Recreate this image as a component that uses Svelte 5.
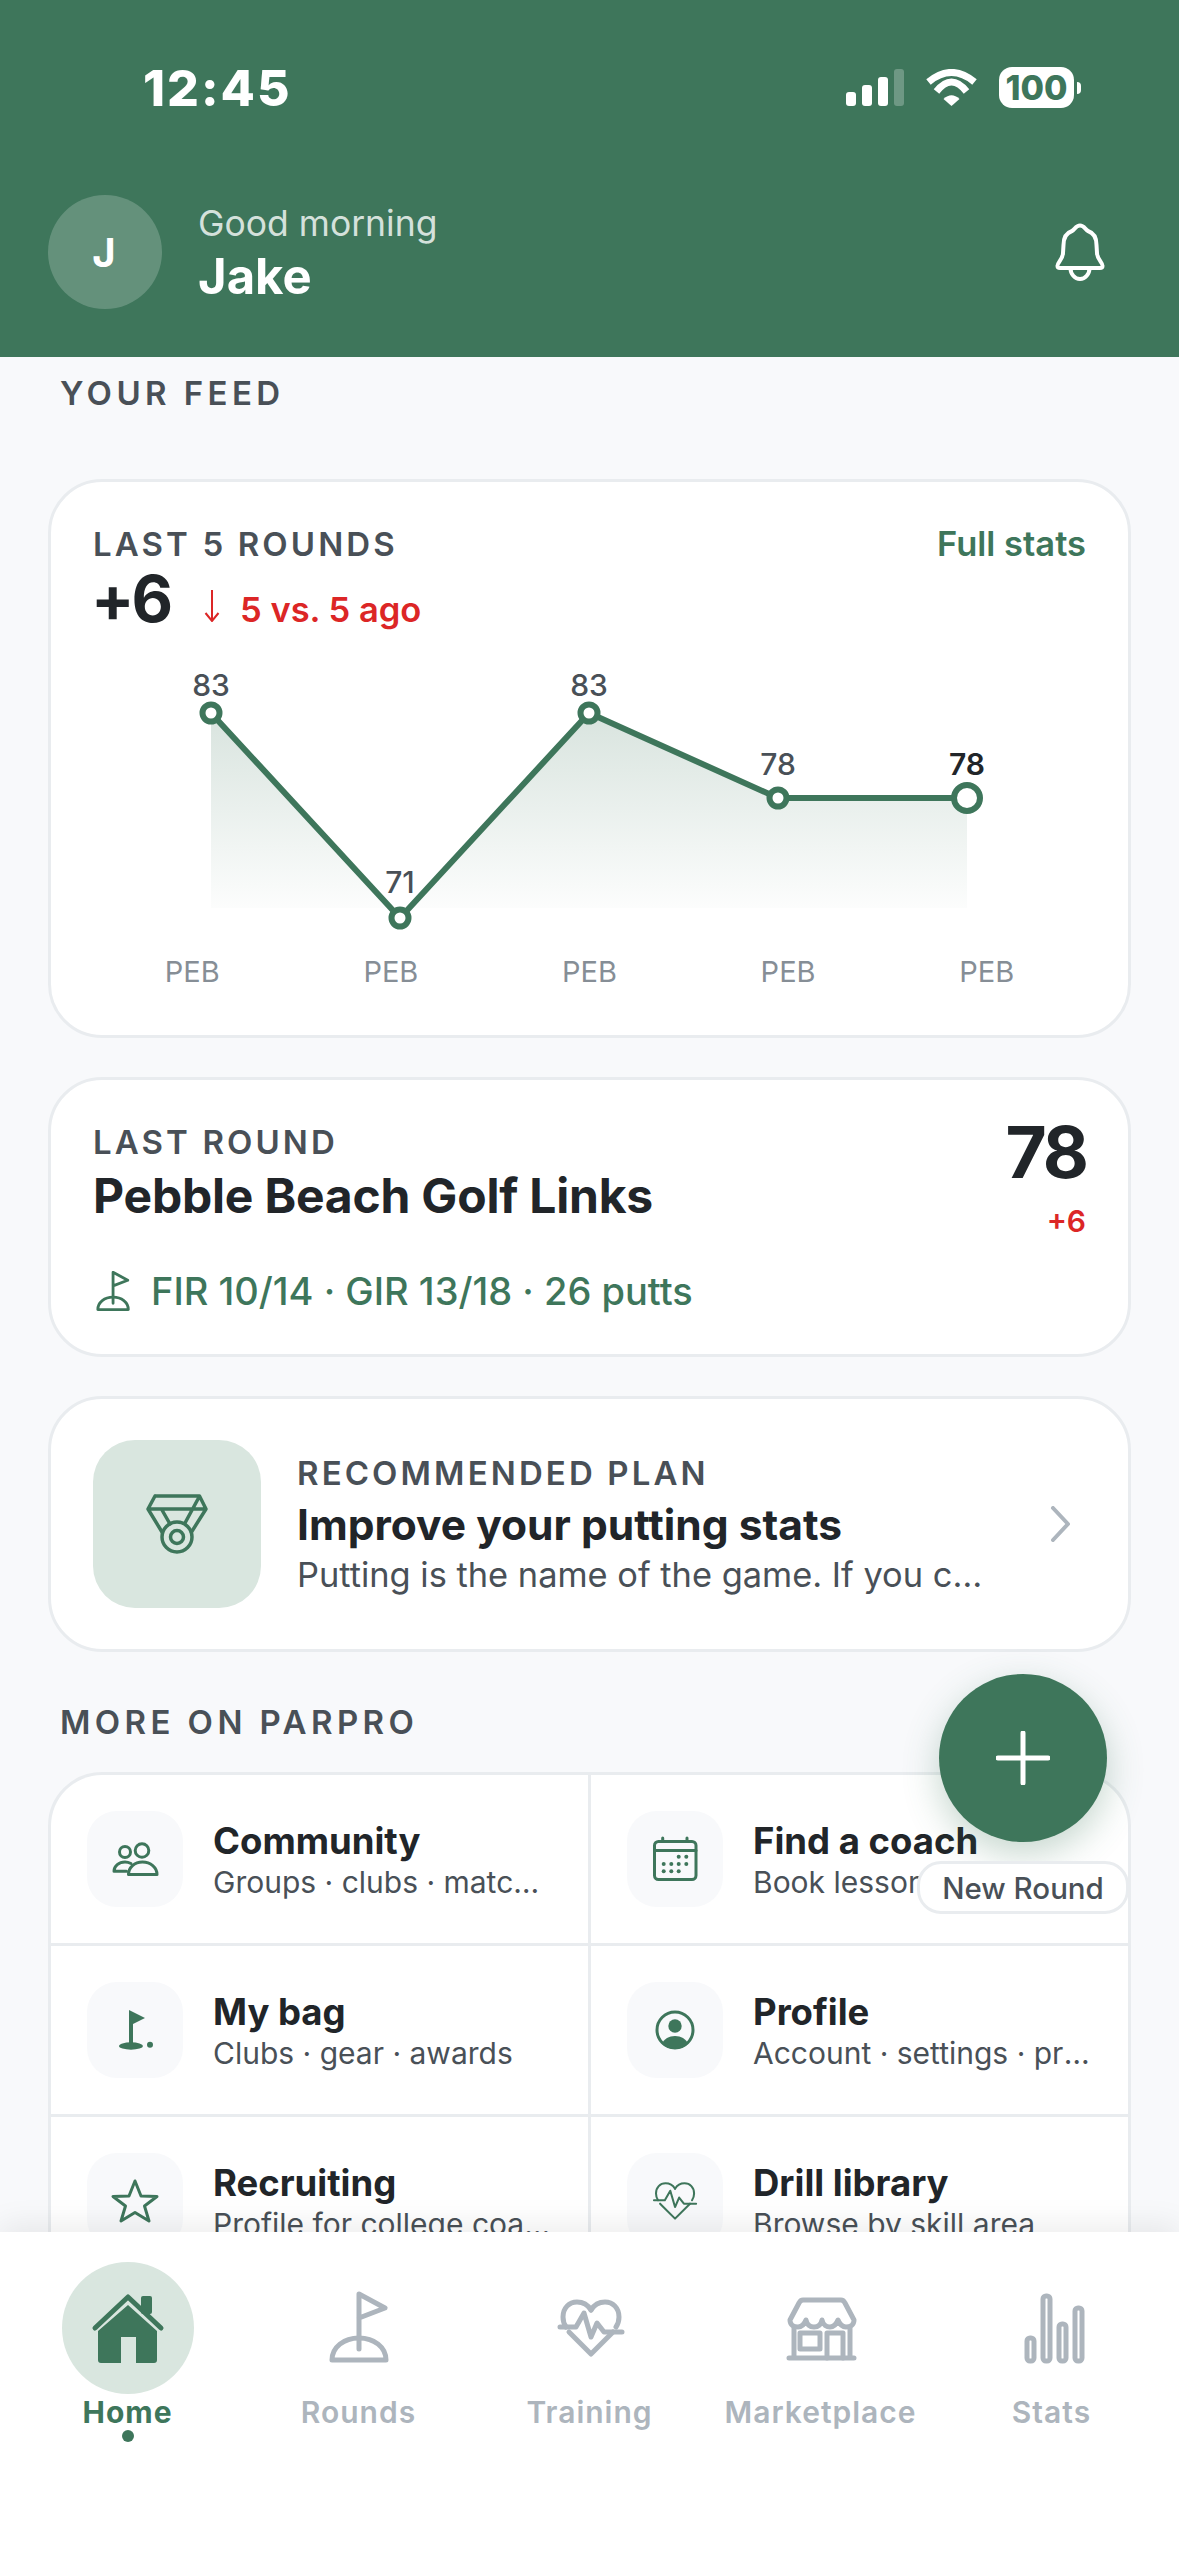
<script>
  // chart points in svg coordinates
  const points = [
    { x: 118, y: 54, value: 83, labelY: 37 },
    { x: 307, y: 259, value: 71, labelY: 234 },
    { x: 496, y: 54, value: 83, labelY: 37 },
    { x: 685, y: 139, value: 78, labelY: 116 },
    { x: 874, y: 139, value: 78, labelY: 116 }
  ];
  const line = points.map((p) => `${p.x},${p.y}`).join(' ');
  const area = `118,249 ${line} 874,249`;

  const links = [
    { icon: 'community', title: 'Community', sub: 'Groups · clubs · match play' },
    { icon: 'calendar', title: 'Find a coach', sub: 'Book lessons nearby' },
    { icon: 'flag', title: 'My bag', sub: 'Clubs · gear · awards' },
    { icon: 'profile', title: 'Profile', sub: 'Account · settings · privacy' },
    { icon: 'star', title: 'Recruiting', sub: 'Profile for college coaches' },
    { icon: 'heart', title: 'Drill library', sub: 'Browse by skill area' }
  ];

  const tabs = [
    { icon: 'home', label: 'Home', active: true },
    { icon: 'rounds', label: 'Rounds' },
    { icon: 'training', label: 'Training' },
    { icon: 'market', label: 'Marketplace' },
    { icon: 'stats', label: 'Stats' }
  ];
</script>

{#snippet heartPaths()}
  <path d="M43 24c-3-5-8-8-14-8-8 0-14 6-14 15 0 4 1 7 3 10" />
  <path d="M21 46l22 22 22-22" />
  <path d="M68 41c2-3 3-6 3-10 0-9-6-15-14-15-6 0-11 3-14 8" />
  <path d="M12 41h16l8-14 7 24 6-14 7 9h18" />
{/snippet}

{#snippet flagPaths()}
  <path d="M42 63V8l26 14-26 10" />
  <path d="M15 74c0-13 12-22 27-22s27 9 27 22z" />
{/snippet}

<div class="app">
  <header class="top">
    <div class="status">
      <span class="time">12:45</span>
      <div class="status-icons">
        <svg class="signal" width="58" height="37" viewBox="0 0 58 37">
          <rect x="0" y="23" width="10" height="14" rx="3" />
          <rect x="16" y="16" width="10" height="21" rx="3" />
          <rect x="32" y="8" width="10" height="29" rx="3" />
          <rect x="48" y="0" width="10" height="37" rx="3" opacity="0.25" />
        </svg>
        <svg class="wifi" width="51" height="37" viewBox="0 0 51 37">
          <path d="M2.5 13Q25.5-6 48.5 13" />
          <path d="M10.5 22.5Q25.5 3.5 40.5 22.5" />
          <path class="wedge" d="M17.5 30Q25.5 22.5 33.5 30L25.5 37z" />
        </svg>
        <div class="battery"><span>100</span></div>
        <i class="nub"></i>
      </div>
    </div>
    <div class="greet">
      <div class="avatar">J</div>
      <div class="hello">
        <p class="morning">Good morning</p>
        <p class="name">Jake</p>
      </div>
      <svg class="bell" width="50" height="58" viewBox="0 0 50 58">
        <path d="M25 2.5C21 2.5 20 6 17 8 11 10 8.500 15 8.500 22L8 30C8 36 2 40 2.500 43 2.500 44.500 3.500 45 5 45H45C46.500 45 47.500 44.500 47.500 43 48 40 42 36 42 30L41.500 22C41.500 15 39 10 33 8 30 6 29 2.500 25 2.500Z" />
        <path d="M15.500 45a9.500 11 0 0 0 19 0" />
      </svg>
    </div>
  </header>

  <main class="scroll">
    <h2 class="section feed">YOUR FEED</h2>

    <section class="card rounds">
      <div class="row-between">
        <span class="label">LAST 5 ROUNDS</span>
        <span class="full">Full stats</span>
      </div>
      <div class="delta">
        <span class="big">+6</span>
        <svg class="arrow" width="16" height="32" viewBox="0 0 16 32">
          <path d="M8 0V31M1.500 23L8 31l6.500-8" />
        </svg>
        <span class="trend">5 vs. 5 ago</span>
      </div>
      <svg class="chart" width="993" height="280" viewBox="0 0 993 280">
        <defs>
          <linearGradient id="fade" x1="0" y1="54" x2="0" y2="265" gradientUnits="userSpaceOnUse">
            <stop offset="0" stop-color="#3e765b" stop-opacity="0.2" />
            <stop offset="1" stop-color="#3e765b" stop-opacity="0" />
          </linearGradient>
        </defs>
        <polygon points={area} fill="url(#fade)" />
        <polyline class="trace" points={line} />
        {#each points as p, i}
          <circle class="dot" cx={p.x} cy={p.y} r={i === 4 ? 13 : 8.500} />
          <text class="value" class:last={i === 4} x={p.x} y={p.labelY}>{p.value}</text>
        {/each}
      </svg>
      <div class="courses">
        {#each points as p}
          <span>PEB</span>
        {/each}
      </div>
    </section>

    <section class="card last">
      <div class="row-between">
        <div>
          <span class="label">LAST ROUND</span>
          <h3 class="course">Pebble Beach Golf Links</h3>
        </div>
        <div class="score">
          <span class="total">78</span>
          <span class="over">+6</span>
        </div>
      </div>
      <div class="line-stats">
        <svg class="stroke-green" width="35" height="41" viewBox="10 6 62 72">
          {@render flagPaths()}
        </svg>
        <span>FIR 10/14 · GIR 13/18 · 26 putts</span>
      </div>
    </section>

    <section class="card plan">
      <div class="thumb">
        <svg width="168" height="168" viewBox="0 0 168 168">
          <path d="M62 56h44.500L113 69l-14.500 23M62 56l-7 13 14 23M55 69h58M69 70l8 14M105 59L92 83" />
          <circle cx="84" cy="97" r="15" />
          <circle cx="84" cy="97" r="6.500" />
        </svg>
      </div>
      <div class="plan-text">
        <span class="label">RECOMMENDED PLAN</span>
        <h3 class="plan-title">Improve your putting stats</h3>
        <p class="plan-sub">Putting is the name of the game. If you commit to it</p>
      </div>
      <svg class="chevron" width="20" height="36" viewBox="0 0 20 36">
        <path d="M3 2l15 16L3 34" />
      </svg>
    </section>

    <h2 class="section more">MORE ON PARPRO</h2>

    <section class="grid">
      {#each links as link}
        <div class="cell">
          <div class="tile">
            <svg class="tile-icon" width="96" height="96" viewBox="0 0 96 96">
              {#if link.icon === 'community'}
                <circle cx="38" cy="41" r="5.500" />
                <circle cx="55" cy="39.500" r="6.800" />
                <path d="M41.500 63.500c0-7 6-12.500 14-12.500s14.500 5.500 14.500 12.500z" />
                <path d="M44 52.500c-2-1-4-1.500-6-1.500-6 0-11 4-11 9.300h12.500" />
              {:else if link.icon === 'calendar'}
                <rect x="27.500" y="30.500" width="41.500" height="38" rx="4" />
                <path d="M27.500 39.500H69M35.700 27v3.500M60 27v3.500" />
                {#each [[51.700, 45.700], [59.300, 45.700], [36.700, 53], [44.300, 53], [51.700, 53], [59.300, 53], [36.700, 60.300], [44.300, 60.300], [51.700, 60.300]] as d}
                  <circle class="solid" cx={d[0]} cy={d[1]} r="2" />
                {/each}
              {:else if link.icon === 'flag'}
                <path class="solid" d="M42 28l16 8-12 6v20h-4z" />
                <ellipse class="solid" cx="44" cy="64" rx="12" ry="3.700" />
                <circle class="solid" cx="63" cy="62.700" r="3" />
              {:else if link.icon === 'profile'}
                <circle cx="48" cy="48" r="18" />
                <circle class="solid" cx="48" cy="44" r="6.700" />
                <path class="solid" d="M35 61.500C37 57 42 54 48 54s11 3 13 7.500C58 65 53 67 48 67s-10-2-13-5.500z" />
              {:else if link.icon === 'star'}
                <polygon points="48,28 54,43 70,43.500 57.500,53 62,68 48,59.500 34,68 38.500,53 26,43.500 42,43" />
              {:else}
                <g transform="translate(18.800 19.400) scale(0.68)" stroke-width="4.400">
                  {@render heartPaths()}
                </g>
              {/if}
            </svg>
          </div>
          <div class="cell-text">
            <h4>{link.title}</h4>
            <p>{link.sub}</p>
          </div>
        </div>
      {/each}
    </section>
  </main>

  <div class="fab-wrap">
    <button class="fab" aria-label="New Round">
      <svg width="54" height="54" viewBox="0 0 54 54">
        <path d="M27 2v50M2 27h50" />
      </svg>
    </button>
    <span class="fab-label">New Round</span>
  </div>

  <nav class="tabs">
    {#each tabs as tab}
      <div class="tab" class:active={tab.active}>
        <div class="tab-icon">
          <svg width="84" height="84" viewBox="0 0 84 84">
            {#if tab.icon === 'home'}
              <path class="home-fill" d="M42 19L12 45v29c0 2 1 3 3 3h20V51h15v26h18c2 0 3-1 3-3V45z" />
              <rect class="home-fill" x="55" y="10" width="11" height="18" rx="2" />
              <path class="home-roof" d="M9 42L42 11l33 31" />
            {:else if tab.icon === 'rounds'}
              {@render flagPaths()}
            {:else if tab.icon === 'training'}
              {@render heartPaths()}
            {:else if tab.icon === 'market'}
              <path d="M24 14h38c2 0 3 1 4 3l9 17c0 5-4 7-8 7-4 0-6-2-8-7-2 5-5 7-8 7s-7-2-8-7c-1 5-4 7-8 7s-7-2-8-7c-2 5-4 7-8 7-4 0-8-2-8-7l9-17c1-2 2-3 4-3z" />
              <path d="M15 41v31M71 41v31M10 72h65" />
              <rect x="21" y="47" width="20" height="16" />
              <path d="M48 72V47h16v25" />
            {:else}
              <rect x="17" y="52" width="7" height="23" rx="3" />
              <rect x="33" y="10" width="7" height="65" rx="3" />
              <rect x="49" y="38" width="7" height="37" rx="3" />
              <rect x="65" y="22" width="7" height="53" rx="3" />
            {/if}
          </svg>
        </div>
        <span class="tab-label">{tab.label}</span>
        {#if tab.active}<i class="tab-dot"></i>{/if}
      </div>
    {/each}
  </nav>
</div>

<style>
  :global(body) {
    margin: 0;
    background: #f8f9fb;
  }

  .app {
    position: relative;
    width: 1179px;
    height: 2556px;
    display: flex;
    flex-direction: column;
    overflow: hidden;
    background: #f8f9fb;
    font-family: Inter, "Liberation Sans", sans-serif;
    color: #212529;
  }

  h2, h3, h4, p {
    margin: 0;
  }

  /* header */
  .top {
    flex: none;
    height: 357px;
    box-sizing: border-box;
    background: #3e765b;
    color: #fff;
    display: flex;
    flex-direction: column;
  }

  .status {
    height: 195px;
    box-sizing: border-box;
    padding: 58px 98px 0 143px;
    display: flex;
    justify-content: space-between;
    align-items: flex-start;
  }

  .time {
    font-size: 50px;
    font-weight: 800;
    line-height: 60px;
    letter-spacing: 2px;
  }

  .status-icons {
    display: flex;
    align-items: center;
    margin-top: 9px;
  }

  .signal rect {
    fill: #fff;
  }

  .wifi {
    margin-left: 22px;
  }

  .wifi path {
    fill: none;
    stroke: #fff;
    stroke-width: 7;
  }

  .wifi .wedge {
    fill: #fff;
    stroke: none;
  }

  .battery {
    margin-left: 22px;
    width: 75px;
    height: 41px;
    border-radius: 13px;
    background: #fff;
    color: #3e765b;
    display: flex;
    align-items: center;
    justify-content: center;
    font-size: 34px;
    font-weight: 800;
  }

  .nub {
    width: 4px;
    height: 12px;
    margin-left: 3px;
    background: #fff;
    border-radius: 0 6px 6px 0;
  }

  .greet {
    display: flex;
    align-items: center;
    padding: 0 74px 0 48px;
  }

  .avatar {
    width: 114px;
    height: 114px;
    padding-right: 2px;
    box-sizing: border-box;
    border-radius: 50%;
    background: rgba(255, 255, 255, 0.2);
    display: flex;
    align-items: center;
    justify-content: center;
    font-size: 40px;
    font-weight: 700;
  }

  .hello {
    flex: 1;
    margin-left: 36px;
    padding-top: 3px;
  }

  .morning {
    font-size: 35.500px;
    line-height: 46px;
    color: rgba(255, 255, 255, 0.8);
  }

  .name {
    font-size: 49px;
    font-weight: 700;
    line-height: 60px;
  }

  .bell path {
    fill: none;
    stroke: #fff;
    stroke-width: 4;
    stroke-linejoin: round;
  }

  /* scrolling feed */
  .scroll {
    flex: 1;
    min-height: 0;
    overflow: hidden;
    padding: 16px 48px 0;
  }

  .section {
    margin-left: 12px;
    font-size: 33px;
    font-weight: 600;
    line-height: 40px;
    letter-spacing: 4.400px;
    color: #495057;
  }

  .feed {
    margin-bottom: 66px;
  }

  .more {
    margin: 50px 0 30px 12px;
  }

  .card {
    box-sizing: border-box;
    background: #fff;
    border: 3px solid #e9ecef;
    border-radius: 54px;
    padding: 42px;
    margin-bottom: 39px;
  }

  .row-between {
    display: flex;
    justify-content: space-between;
    align-items: flex-start;
  }

  .label {
    display: block;
    font-size: 33px;
    font-weight: 600;
    line-height: 40px;
    letter-spacing: 3.100px;
    color: #495057;
  }

  .full {
    font-size: 34.500px;
    font-weight: 600;
    line-height: 40px;
    color: #3e765b;
  }

  .delta {
    display: flex;
    align-items: baseline;
    height: 66px;
    line-height: 66px;
    margin-top: 2px;
  }

  .big {
    font-size: 64px;
    font-weight: 700;
    letter-spacing: -3px;
    margin-left: -2px;
  }

  .arrow {
    margin-left: 34px;
    margin-right: 20px;
    margin-bottom: -2px;
  }

  .arrow path {
    fill: none;
    stroke: #dc2626;
    stroke-width: 2;
  }

  .trend {
    font-size: 34.500px;
    font-weight: 600;
    color: #dc2626;
  }

  .chart {
    display: block;
    margin-top: 27px;
  }

  .trace {
    fill: none;
    stroke: #3e765b;
    stroke-width: 6;
    stroke-linejoin: round;
  }

  .dot {
    fill: #fff;
    stroke: #3e765b;
    stroke-width: 6;
  }

  .value {
    font-size: 30px;
    font-weight: 500;
    fill: #495057;
    text-anchor: middle;
  }

  .value.last {
    font-weight: 600;
    fill: #212529;
  }

  .courses {
    display: flex;
    margin-top: 15px;
    margin-bottom: 3px;
  }

  .courses span {
    flex: 1;
    text-align: center;
    font-size: 29px;
    line-height: 36px;
    color: #868e96;
  }

  .course {
    margin-top: 5px;
    font-size: 48px;
    font-weight: 700;
    line-height: 58px;
    letter-spacing: -0.200px;
  }

  .score {
    display: flex;
    flex-direction: column;
    align-items: flex-end;
  }

  .total {
    font-size: 71px;
    font-weight: 700;
    line-height: 60px;
    letter-spacing: -3px;
  }

  .over {
    margin-top: 21px;
    font-size: 30px;
    font-weight: 600;
    line-height: 36px;
    color: #dc2626;
  }

  .line-stats {
    display: flex;
    align-items: center;
    gap: 21px;
    margin-top: 31px;
    font-size: 38px;
    font-weight: 500;
    line-height: 42px;
    color: #3e765b;
  }

  .stroke-green {
    margin-left: 2px;
  }

  .stroke-green :global(path) {
    fill: none;
    stroke: #3e765b;
    stroke-width: 5;
    stroke-linejoin: round;
    stroke-linecap: round;
  }

  .plan {
    display: flex;
    align-items: center;
    padding: 41px 42px;
    margin-bottom: 0;
  }

  .thumb {
    flex: none;
    width: 168px;
    height: 168px;
    border-radius: 42px;
    background: #d9e6df;
  }

  .thumb svg {
    display: block;
  }

  .thumb path,
  .thumb circle {
    fill: none;
    stroke: #3e765b;
    stroke-width: 3.500;
    stroke-linejoin: round;
    stroke-linecap: round;
  }

  .plan-text {
    flex: 1;
    min-width: 0;
    margin-left: 36px;
  }

  .plan-title {
    margin-top: 6px;
    font-size: 42.500px;
    font-weight: 700;
    line-height: 52px;
  }

  .plan-sub {
    margin-top: 4px;
    font-size: 34.400px;
    line-height: 40px;
    color: #495057;
    white-space: nowrap;
    overflow: hidden;
    text-overflow: ellipsis;
    max-width: 692px;
  }

  .chevron {
    flex: none;
    margin-right: 16px;
  }

  .chevron path {
    fill: none;
    stroke: #adb5bd;
    stroke-width: 4;
    stroke-linecap: round;
    stroke-linejoin: round;
  }

  /* link grid */
  .grid {
    display: grid;
    grid-template-columns: 1fr 1fr;
    gap: 3px;
    background: #e9ecef;
    border: 3px solid #e9ecef;
    border-radius: 54px;
    overflow: hidden;
  }

  .cell {
    height: 168px;
    box-sizing: border-box;
    background: #fff;
    display: flex;
    align-items: center;
    padding: 0 36px;
    min-width: 0;
  }

  .tile {
    flex: none;
    width: 96px;
    height: 96px;
    border-radius: 30px;
    background: #f8f9fb;
  }

  .tile-icon {
    display: block;
  }

  .tile-icon :global(path),
  .tile-icon circle,
  .tile-icon rect,
  .tile-icon polygon {
    fill: none;
    stroke: #3e765b;
    stroke-width: 3;
    stroke-linejoin: round;
    stroke-linecap: round;
  }

  .tile-icon .solid {
    fill: #3e765b;
    stroke: none;
  }

  .tile-icon ellipse {
    fill: #3e765b;
  }

  .cell-text {
    flex: 1;
    min-width: 0;
    margin-left: 30px;
    padding-top: 2px;
  }

  .cell-text h4 {
    font-size: 36.500px;
    font-weight: 700;
    line-height: 44px;
  }

  .cell-text p {
    font-size: 30px;
    line-height: 38px;
    color: #495057;
    white-space: nowrap;
    overflow: hidden;
    text-overflow: ellipsis;
  }

  /* floating button */
  .fab-wrap {
    position: absolute;
    top: 1674px;
    right: 50px;
    display: flex;
    flex-direction: column;
    align-items: center;
    gap: 19px;
  }

  .fab {
    width: 168px;
    height: 168px;
    border: none;
    border-radius: 50%;
    padding: 0;
    background: #3e765b;
    box-shadow: 0 12px 36px rgba(62, 118, 91, 0.3);
    display: flex;
    align-items: center;
    justify-content: center;
  }

  .fab path {
    fill: none;
    stroke: #fff;
    stroke-width: 5;
    stroke-linecap: round;
  }

  .fab-label {
    box-sizing: border-box;
    width: 212px;
    height: 53px;
    border: 3px solid #e9ecef;
    border-radius: 24px;
    background: #fff;
    font-size: 29.500px;
    font-weight: 500;
    line-height: 49px;
    text-align: center;
    color: #495057;
  }

  /* tab bar */
  .tabs {
    position: relative;
    flex: none;
    height: 324px;
    box-sizing: border-box;
    padding: 30px 12px 0;
    background: #fff;
    box-shadow: 0 -6px 30px rgba(0, 0, 0, 0.08);
    display: grid;
    grid-template-columns: repeat(5, 231px);
    align-items: start;
  }

  .tab {
    display: flex;
    flex-direction: column;
    align-items: center;
  }

  .tab-icon {
    width: 132px;
    height: 132px;
    border-radius: 50%;
    display: flex;
    align-items: center;
    justify-content: center;
  }

  .active .tab-icon {
    background: #d9e6df;
  }

  .tab-icon :global(path),
  .tab-icon rect {
    fill: none;
    stroke: #adb5bd;
    stroke-width: 5;
    stroke-linecap: round;
    stroke-linejoin: round;
  }

  .tab-icon .home-fill {
    fill: #3e765b;
    stroke: none;
  }

  .tab-icon .home-roof {
    stroke: #3e765b;
  }

  .tab-label {
    font-size: 30px;
    font-weight: 600;
    line-height: 36px;
    letter-spacing: 1px;
    color: #adb5bd;
  }

  .active .tab-label {
    font-weight: 700;
    color: #3e765b;
  }

  .tab-dot {
    width: 12px;
    height: 12px;
    border-radius: 50%;
    background: #3e765b;
  }
</style>
